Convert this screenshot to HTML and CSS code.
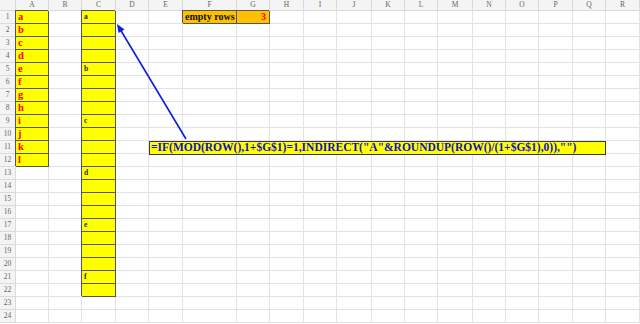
FILE: index.html
```html
<!DOCTYPE html>
<html lang="en">
<head>
    <meta charset="UTF-8">
    <title>Empty rows</title>
    <link rel="stylesheet" href="styles.css">
</head>
<body>
    <div class="sheet">
        <div id="grid" class="grid"></div>

        <div class="formula">=IF(MOD(ROW(),1+$G$1)=1,INDIRECT("A"&amp;ROUNDUP(ROW()/(1+$G$1),0)),"")</div>

        <svg class="arrow" width="640" height="324" viewBox="0 0 640 324">
            <line x1="186" y1="139" x2="120" y2="29" stroke="#0a1fe0" stroke-width="1.6"/>
            <polygon points="117,24 118.5,33 124.5,29.5" fill="#0a1fe0"/>
        </svg>
    </div>

    <script>
        const cols = ["A", "B", "C", "D", "E", "F", "G", "H", "I", "J", "K", "L", "M", "N", "O", "P", "Q", "R"];
        const source = ["a", "b", "c", "d", "e", "f", "g", "h", "i", "j", "k", "l"];
        const gap = 3;
        const grid = document.getElementById("grid");

        function cell(cls, text) {
            const el = document.createElement("div");
            el.className = "cell " + cls;
            el.textContent = text || "";
            grid.appendChild(el);
        }

        cell("corner");
        cols.forEach(c => cell("col-head", c));

        for (let r = 1; r <= 24; r++) {
            cell("row-head", r);
            cols.forEach(c => {
                if (c === "A" && r <= source.length) {
                    cell("yellow src", source[r - 1]);
                } else if (c === "C" && r <= 22) {
                    const text = (r - 1) % (gap + 1) === 0 ? source[(r - 1) / (gap + 1)] : "";
                    cell("yellow out", text);
                } else if (r === 1 && c === "F") {
                    cell("orange label", "empty rows");
                } else if (r === 1 && c === "G") {
                    cell("orange value", gap);
                } else {
                    cell("");
                }
            });
        }
    </script>
</body>
</html>
```

FILE: styles.css
```css
body {
    margin: 0;
    background: #fff;
    font-family: "Liberation Serif", serif;
}
.sheet {
    position: relative;
    width: 640px;
    height: 324px;
    overflow: hidden;
}
.grid {
    display: grid;
    grid-template-columns: 16px 33px 33px 34px 33px 34px 54px 33px 34px 33px 35px 33px 33px 35px 33px 33px 34px 33px 34px;
    grid-template-rows: 11px repeat(24, 13px);
}
.cell {
    box-sizing: border-box;
    border-right: 1px solid #e2e2e2;
    border-bottom: 1px solid #e2e2e2;
    overflow: hidden;
    white-space: nowrap;
    line-height: 12px;
}
.corner,
.col-head,
.row-head {
    background: #f4f4f4;
    color: #666;
    font-size: 7.5px;
    text-align: center;
    border-color: #dadada;
}
.col-head {
    line-height: 10px;
}
.yellow,
.orange {
    border-right-color: #555;
    border-bottom-color: #555;
    box-shadow: -1px -1px 0 #555;
}
.yellow {
    background: #ffff00;
}
.orange {
    background: #ffc000;
    font-weight: bold;
}
.src {
    color: #ff0000;
    font-weight: bold;
    font-size: 10.5px;
    padding-left: 2px;
}
.out {
    color: #23235e;
    font-weight: bold;
    font-size: 7.5px;
    padding-left: 2px;
}
.label {
    font-size: 10px;
    color: #111;
    padding-left: 2px;
}
.value {
    font-size: 10px;
    color: #ff0000;
    text-align: right;
    padding-right: 3px;
}
.formula {
    position: absolute;
    left: 149px;
    top: 141px;
    width: 457px;
    height: 14px;
    box-sizing: border-box;
    border: 1.5px solid #3a3a3a;
    background: #ffff00;
    color: #1010d0;
    font-weight: bold;
    font-size: 11.5px;
    line-height: 11px;
    padding-left: 1px;
    white-space: nowrap;
}
.arrow {
    position: absolute;
    left: 0;
    top: 0;
}
```
